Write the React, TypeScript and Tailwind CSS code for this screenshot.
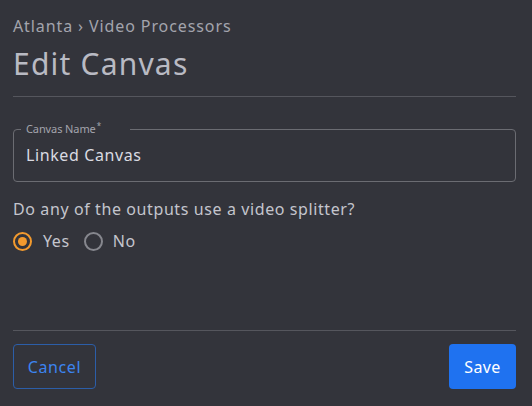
export default function App() {
  return (
    <div className="w-[532px] h-[406px] bg-[#33343b] font-['Noto_Sans',sans-serif] flex flex-col pl-[13px] pr-[16px]">
      <div className="pt-[16px] text-[16px] leading-[20px] tracking-[0.9px] text-[#a3a4ad]">Atlanta › Video Processors</div>
      <h1 className="mt-[10px] text-[30px] leading-[35px] tracking-[1.2px] text-[#b9bac3]">Edit Canvas</h1>
      <div className="mt-[15px] h-px bg-[#55565d]" />

      <div className="mt-[32px] relative h-[53px] rounded-[4px] border border-[#6b6c72]">
        <span className="absolute -top-[8px] left-[7px] bg-[#33343b] pl-[5px] pr-[29px] text-[11px] leading-[14px] tracking-[-0.1px] text-[#a3a4ad]">
          Canvas Name<sup className="text-[8px] ml-[1px]">*</sup>
        </span>
        <div className="pl-[12px] pt-[15px] text-[16px] leading-[20px] tracking-[0.6px] text-[#dadbe2]">Linked Canvas</div>
      </div>

      <div className="mt-[17px] text-[16px] leading-[20px] tracking-[0.6px] text-[#c4c5cd]">Do any of the outputs use a video splitter?</div>

      <div className="mt-[12px] flex items-center text-[16px] leading-[20px] tracking-[0.6px] text-[#c4c5cd]">
        <span className="w-[19px] h-[19px] rounded-full border-2 border-[#f39a2e] flex items-center justify-center">
          <span className="w-[9px] h-[9px] rounded-full bg-[#f39a2e]" />
        </span>
        <span className="ml-[11px]">Yes</span>
        <span className="ml-[14px] w-[19px] h-[19px] rounded-full border-2 border-[#86878e]" />
        <span className="ml-[10px]">No</span>
      </div>

      <div className="mt-auto h-px bg-[#55565d]" />
      <div className="pt-[13px] pb-[17px] flex justify-between">
        <button className="w-[83px] h-[45px] rounded-[4px] border border-[#2c5ea8] text-[16px] tracking-[0.6px] text-[#3c84f0]">Cancel</button>
        <button className="w-[67px] h-[45px] rounded-[4px] bg-[#1f72f0] text-[16px] tracking-[0.4px] text-white">Save</button>
      </div>
    </div>
  );
}
